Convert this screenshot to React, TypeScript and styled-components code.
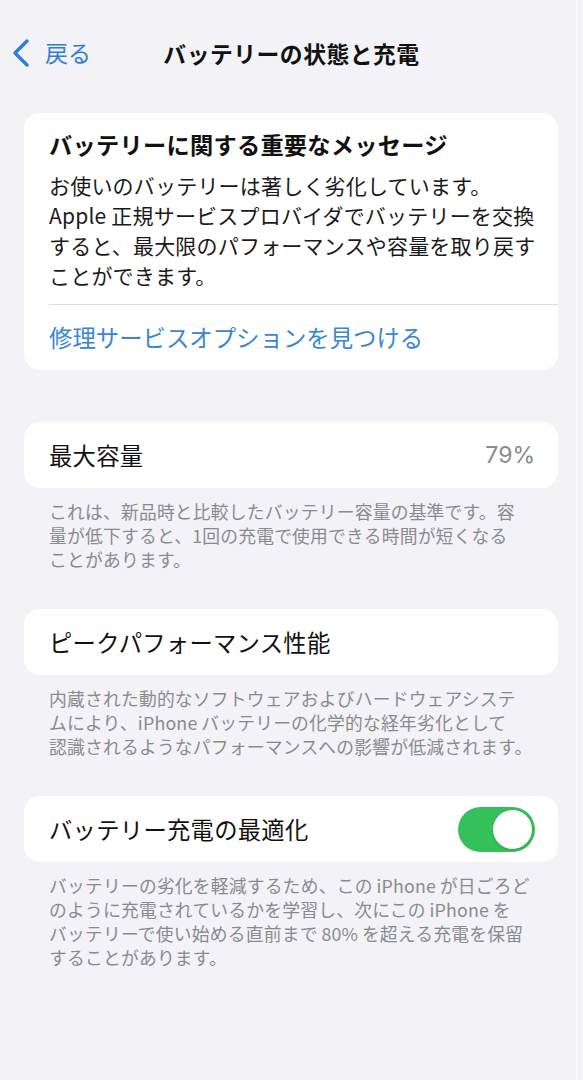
import React from 'react';
import styled, { createGlobalStyle } from 'styled-components';

const GlobalStyle = createGlobalStyle`
  html, body {
    margin: 0;
    padding: 0;
    background: #f2f2f7;
  }
  body {
    font-family: 'Noto Sans CJK JP', 'Noto Sans', sans-serif;
    -webkit-font-smoothing: antialiased;
  }
`;

// iOS breaks Japanese by phrase, so the lines are kept as in the screenshot
const messageLines = [
  'お使いのバッテリーは著しく劣化しています。',
  'Apple 正規サービスプロバイダでバッテリーを交換',
  'すると、最大限のパフォーマンスや容量を取り戻す',
  'ことができます。',
];

const sections = [
  {
    title: '最大容量',
    value: '79%',
    footer: [
      'これは、新品時と比較したバッテリー容量の基準です。容',
      '量が低下すると、1回の充電で使用できる時間が短くなる',
      'ことがあります。',
    ],
  },
  {
    title: 'ピークパフォーマンス性能',
    footer: [
      '内蔵された動的なソフトウェアおよびハードウェアシステ',
      'ムにより、iPhone\u2009バッテリーの化学的な経年劣化として',
      '認識されるようなパフォーマンスへの影響が低減されます。',
    ],
  },
  {
    title: 'バッテリー充電の最適化',
    toggle: true,
    footer: [
      'バッテリーの劣化を軽減するため、この\u2009iPhone\u2009が日ごろど',
      'のように充電されているかを学習し、次にこの\u2009iPhone\u2009を',
      'バッテリーで使い始める直前まで\u200980%\u2009を超える充電を保留',
      'することがあります。',
    ],
  },
];

const App: React.FC = () => {
  return (
    <Page>
      <GlobalStyle />
      <NavBar>
        <BackButton>
          <svg width='18' height='28' viewBox='0 0 18 28'>
            <path
              d='M15 2 L3 14 L15 26'
              fill='none'
              stroke='#2f7ddb'
              strokeWidth='3.4'
              strokeLinecap='round'
              strokeLinejoin='round'
            />
          </svg>
          <span>戻る</span>
        </BackButton>
        <NavTitle>バッテリーの状態と充電</NavTitle>
      </NavBar>

      <MessageCard>
        <MessageBody>
          <MessageTitle>バッテリーに関する重要なメッセージ</MessageTitle>
          <MessageText>
            {messageLines.map((line) => (
              <Line key={line}>{line}</Line>
            ))}
          </MessageText>
        </MessageBody>
        <Divider />
        <LinkRow>修理サービスオプションを見つける</LinkRow>
      </MessageCard>

      {sections.map((s, i) => (
        <Section key={s.title} first={i === 0}>
          <Row>
            <RowLabel>{s.title}</RowLabel>
            {s.value && <RowValue>{s.value}</RowValue>}
            {s.toggle && (
              <Toggle>
                <Knob />
              </Toggle>
            )}
          </Row>
          <Footer>
            {s.footer.map((line) => (
              <Line key={line}>{line}</Line>
            ))}
          </Footer>
        </Section>
      ))}
      <EdgeLine />
    </Page>
  );
};

const Page = styled.div`
  position: relative;
  width: 583px;
  min-height: 1080px;
  background: #f2f2f7;
  box-sizing: border-box;
  padding-top: 36px;
`;

const NavBar = styled.div`
  position: relative;
  display: flex;
  align-items: center;
  height: 34px;
  padding-left: 12px;
`;

const BackButton = styled.div`
  display: flex;
  align-items: center;
  gap: 15px;
  color: #2f7ddb;
  font-size: 23px;
  line-height: 1;
  span {
    margin-top: -2px;
  }
`;

const NavTitle = styled.div`
  position: absolute;
  left: 0;
  right: 0;
  text-align: center;
  font-size: 22.8px;
  font-weight: 700;
  color: #111;
  letter-spacing: 0.5px;
  pointer-events: none;
`;

const MessageCard = styled.div`
  margin: 43px 25px 0 24px;
  background: #fff;
  border-radius: 16px;
  overflow: hidden;
`;

const MessageBody = styled.div`
  padding: 16px 10px 14px 25px;
`;

const MessageTitle = styled.div`
  font-size: 23.2px;
  font-weight: 700;
  color: #111;
  line-height: 30px;
  letter-spacing: 0.3px;
`;

const MessageText = styled.div`
  margin-top: 11px;
  font-size: 21px;
  line-height: 30px;
  color: #1a1a1a;
  letter-spacing: 0.2px;
`;

const Line = styled.div`
  white-space: nowrap;
`;

const Divider = styled.div`
  height: 1px;
  background: #dcdce0;
  margin-left: 25px;
`;

const LinkRow = styled.div`
  padding: 17px 25px 18px;
  font-size: 23.4px;
  line-height: 30px;
  color: #3a86d6;
`;

const Section = styled.div<{ first?: boolean }>`
  margin-top: ${(p) => (p.first ? '52px' : '38px')};
`;

const Row = styled.div`
  display: flex;
  align-items: center;
  justify-content: space-between;
  height: 66px;
  margin: 0 25px 0 24px;
  padding: 0 23px 0 25px;
  background: #fff;
  border-radius: 16px;
`;

const RowLabel = styled.div`
  font-size: 23.3px;
  color: #111;
  letter-spacing: 0.3px;
`;

const RowValue = styled.div`
  font-family: 'Inter', 'Noto Sans', sans-serif;
  font-size: 23px;
  color: #8a8a8e;
`;

const Toggle = styled.div`
  position: relative;
  width: 77px;
  height: 45px;
  border-radius: 23px;
  background: #34c15a;
`;

const Knob = styled.div`
  position: absolute;
  right: 3px;
  top: 3px;
  width: 39px;
  height: 39px;
  border-radius: 50%;
  background: #fff;
  box-shadow: 0 1px 3px rgba(0, 0, 0, 0.15);
`;

const Footer = styled.div`
  padding: 11px 20px 0 49px;
  font-size: 17.8px;
  line-height: 24px;
  color: #8a8a8e;
  letter-spacing: 0.2px;
`;

const EdgeLine = styled.div`
  position: absolute;
  top: 0;
  bottom: 0;
  right: 5px;
  width: 2px;
  background: #f9f9fb;
`;

export default App;
